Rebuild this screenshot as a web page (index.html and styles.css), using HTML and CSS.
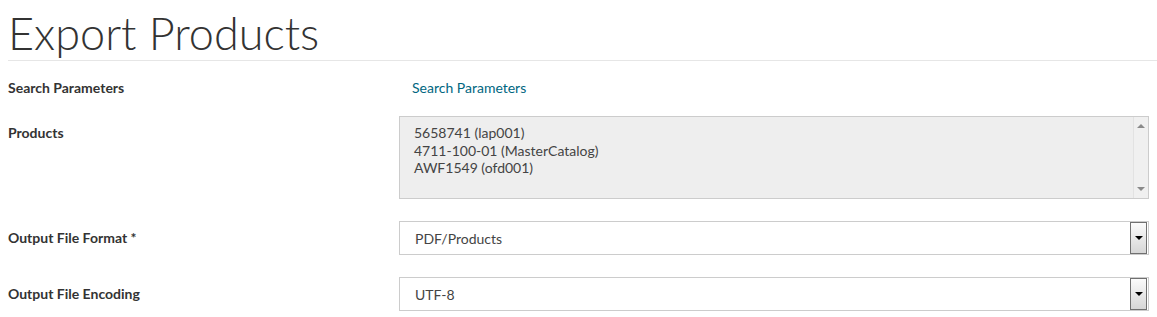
FILE: index.html
```html
<!DOCTYPE html>
<html>
<head>
<meta charset="utf-8">
<link rel="stylesheet" href="styles.css">
</head>
<body>
<div class="page">
  <h1 class="title">Export Products</h1>
  <div class="form">
    <div class="row row-link">
      <div class="label">Search Parameters</div>
      <div class="field"><a class="link" href="#">Search Parameters</a></div>
    </div>
    <div class="row">
      <div class="label">Products</div>
      <div class="field">
        <div class="textarea">
          <div class="textarea-body">
            <div>5658741 (lap001)</div>
            <div>4711-100-01 (MasterCatalog)</div>
            <div>AWF1549 (ofd001)</div>
          </div>
          <div class="scrollbar">
            <span class="arrow-up"></span>
            <span class="arrow-down"></span>
          </div>
        </div>
      </div>
    </div>
    <div class="row">
      <div class="label">Output File Format *</div>
      <div class="field">
        <div class="select"><span>PDF/Products</span><span class="select-btn"><span class="caret"></span></span></div>
      </div>
    </div>
    <div class="row">
      <div class="label">Output File Encoding</div>
      <div class="field">
        <div class="select"><span>UTF-8</span><span class="select-btn"><span class="caret"></span></span></div>
      </div>
    </div>
  </div>
</div>
</body>
</html>
```

FILE: styles.css
```css
* { box-sizing: border-box; }
html, body { margin: 0; padding: 0; background: #fff; }
body {
  font-family: Lato, "Open Sans", "Liberation Sans", sans-serif;
  color: #333;
  font-size: 14px;
}
.page { padding: 0 0 0 8px; }
.title {
  margin: 0;
  padding-top: 7px;
  font-weight: 300;
  font-size: 45px;
  line-height: 52px;
  color: #333;
  padding-bottom: 1px;
  border-bottom: 1px solid #e6e6e6;
}
.form { padding-top: 15px; }
.row {
  display: grid;
  grid-template-columns: 391px 750px;
  margin-bottom: 22px;
}
.row:last-child { margin-bottom: 0; }
.row-link { margin-bottom: 18px; }
.label {
  font-weight: 700;
  font-size: 14px;
  line-height: 20px;
  padding-top: 7px;
  color: #333;
}
.row-link .label { padding-top: 2px; }
.row-link .field { padding-top: 2px; line-height: 20px; }
.link {
  color: #00667f;
  text-decoration: none;
  font-size: 14px;
  padding-left: 13px;
}
.textarea {
  display: flex;
  height: 83px;
  border: 1px solid #ccc;
  background: #eeeeee;
}
.textarea-body {
  flex: 1;
  padding: 7px 14px;
  font-size: 14px;
  line-height: 17.5px;
  color: #444;
}
.scrollbar {
  width: 15px;
  position: relative;
  border-left: 1px solid #e2e2e2;
  background: #f0f0f0;
}
.arrow-up, .arrow-down {
  position: absolute;
  left: 3px;
  width: 0; height: 0;
  border-left: 4px solid transparent;
  border-right: 4px solid transparent;
}
.arrow-up { top: 7px; border-bottom: 4px solid #8a8a8a; }
.arrow-down { bottom: 7px; border-top: 4px solid #8a8a8a; }
.select {
  display: flex;
  align-items: center;
  justify-content: space-between;
  height: 34px;
  border: 1px solid #ccc;
  background: #fff;
  padding-left: 15px;
  font-size: 14px;
  color: #444;
}
.select-btn {
  width: 17px;
  height: 32px;
  margin-right: 1px;
  border: 1px solid #707070;
  background: linear-gradient(#fbfbfb, #d6d6d6);
  display: flex;
  align-items: center;
  justify-content: center;
}
.caret {
  width: 0; height: 0;
  border-left: 4px solid transparent;
  border-right: 4px solid transparent;
  border-top: 4px solid #000;
}
```
